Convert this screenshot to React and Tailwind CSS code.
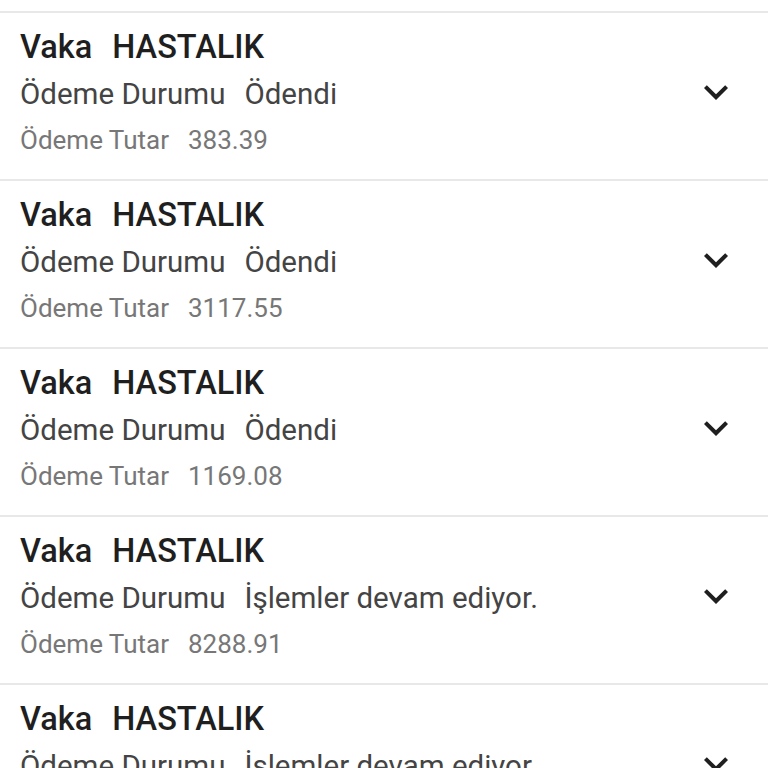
import React from "react";

const items = [
  { status: "Ödendi", amount: "383.39" },
  { status: "Ödendi", amount: "3117.55" },
  { status: "Ödendi", amount: "1169.08" },
  { status: "İşlemler devam ediyor.", amount: "8288.91" },
  { status: "İşlemler devam ediyor.", amount: "1000.00" },
];

function Chevron() {
  return (
    <svg width="48" height="48" viewBox="0 0 24 24" className="shrink-0 mb-[8px]">
      <path d="M16.59 8.59L12 13.17 7.41 8.59 6 10l6 6 6-6z" fill="#1f1f1f" />
    </svg>
  );
}

export default function App() {
  return (
    <div className="w-[768px] h-[768px] overflow-hidden bg-white" style={{ fontFamily: "Roboto, 'Noto Sans', sans-serif" }}>
      <div className="h-[11px]" />
      {items.map((it, i) => (
        <div key={i} className="border-t-2 border-[#e8e8e8]">
          <div className="h-[166px] flex items-center pl-[20px] pr-[28px]">
            <div className="flex-1 flex flex-col self-start pt-[14px]">
              <div className="text-[32.5px] leading-[40px] font-medium text-[#1f1f1f] whitespace-nowrap">
                Vaka<span className="ml-[20px]">HASTALIK</span>
              </div>
              <div className="mt-[5px] text-[29.5px] leading-[44px] text-[#444444] whitespace-nowrap">
                Ödeme Durumu<span className="ml-[19px]">{it.status}</span>
              </div>
              <div className="mt-[6px] text-[26px] leading-[36px] text-[#777777] whitespace-nowrap">
                Ödeme Tutar<span className="ml-[19px]">{it.amount}</span>
              </div>
            </div>
            <Chevron />
          </div>
        </div>
      ))}
    </div>
  );
}
